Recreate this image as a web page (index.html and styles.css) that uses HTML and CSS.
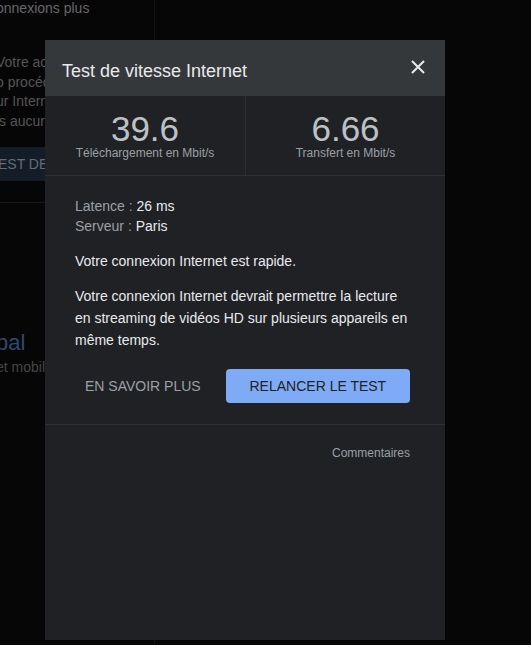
FILE: index.html
```html
<!DOCTYPE html>
<html lang="fr">
<head>
    <meta charset="UTF-8">
    <meta name="viewport" content="width=device-width, initial-scale=1.0">
    <title>Test de vitesse Internet</title>
    <link rel="stylesheet" href="styles.css">
</head>
<body>

<!-- page behind the dialog (dimmed) -->
<div class="page">
    <div class="side">
        <p class="side-top">onnexions plus</p>
        <p class="side-text">Votre accès<br>o procédure<br>ur Internet<br>is aucune</p>
        <div class="side-btn">EST DE DÉBIT</div>
        <hr class="side-rule">
        <h2 class="side-title">bal</h2>
        <p class="side-sub">et mobile</p>
    </div>
</div>

<div class="dialog">
    <div class="dialog-head">
        <h1>Test de vitesse Internet</h1>
        <button class="close" aria-label="Fermer">
            <svg width="14" height="14" viewBox="0 0 14 14">
                <path d="M1 1L13 13M13 1L1 13" stroke="#e8eaed" stroke-width="2" fill="none"/>
            </svg>
        </button>
    </div>

    <div class="stats">
        <div class="stat">
            <div class="stat-num">39.6</div>
            <div class="stat-label">Téléchargement en Mbit/s</div>
        </div>
        <div class="stat">
            <div class="stat-num">6.66</div>
            <div class="stat-label">Transfert en Mbit/s</div>
        </div>
    </div>

    <div class="dialog-body">
        <p class="meta"><span>Latence :</span> 26 ms<br><span>Serveur :</span> Paris</p>
        <p class="verdict">Votre connexion Internet est rapide.</p>
        <p class="detail">Votre connexion Internet devrait permettre la lecture en streaming de vidéos HD sur plusieurs appareils en même temps.</p>
        <div class="actions">
            <button class="link-btn">EN SAVOIR PLUS</button>
            <button class="main-btn">RELANCER LE TEST</button>
        </div>
    </div>

    <div class="dialog-foot">
        <a href="#">Commentaires</a>
    </div>
</div>

</body>
</html>
```

FILE: styles.css
```css
body {
    font-family: "Liberation Sans", Arial, sans-serif;
    margin: 0;
    padding: 0;
    background-color: #060606;
    width: 531px;
    height: 645px;
    overflow: hidden;
    position: relative;
}

/* Background page */
.page {
    height: 645px;
}
.side {
    width: 158px;
    margin-left: -4px;
    height: 645px;
    border-right: 1px solid #111;
}
.side p {
    margin: 0;
}
.side-top {
    font-size: 14px;
    color: #666;
    line-height: 16px;
}
.side-text {
    font-size: 14px;
    color: #555;
    line-height: 19.5px;
    margin-top: 37px !important;
}
.side-btn {
    margin-top: 16px;
    background-color: #131c27;
    color: #646d7a;
    font-size: 14px;
    height: 34px;
    line-height: 34px;
    padding-left: 2px;
    width: 120px;
}
.side-rule {
    border: 0;
    border-top: 1px solid #171717;
    margin: 21px 0 0;
}
.side-title {
    margin: 127px 0 0;
    font-size: 22px;
    font-weight: normal;
    color: #2c4a6c;
    line-height: 26px;
}
.side-sub {
    font-size: 14px;
    color: #464646;
    line-height: 18px;
    margin-top: 2px !important;
}

/* Dialog */
.dialog {
    position: absolute;
    left: 45px;
    top: 40px;
    width: 400px;
    height: 600px;
    background-color: #202124;
}
.dialog-head {
    height: 56px;
    background-color: #35383b;
    display: flex;
    align-items: center;
    justify-content: space-between;
    padding: 0 20px 0 17px;
}
.dialog-head h1 {
    margin: 0;
    font-size: 18px;
    font-weight: normal;
    color: #e8eaed;
    padding-top: 6px;
}
.close {
    background: none;
    border: 0;
    padding: 0;
    width: 14px;
    height: 14px;
    cursor: pointer;
    margin-top: -2px;
}
.close svg {
    display: block;
}

.stats {
    display: grid;
    grid-template-columns: 1fr 1fr;
    height: 79px;
    border-bottom: 1px solid #2e2f32;
}
.stat {
    text-align: center;
    padding-top: 15px;
}
.stat + .stat {
    border-left: 1px solid #2e2f32;
}
.stat-num {
    font-size: 35px;
    line-height: 35px;
    color: #bdc1c6;
}
.stat-label {
    font-size: 12px;
    line-height: 14px;
    color: #9aa0a6;
}

.dialog-body {
    padding: 20px 35px 21px 30px;
    border-bottom: 1px solid #2e2f32;
    font-size: 14px;
    color: #e8eaed;
}
.dialog-body p {
    margin: 0;
}
.meta {
    line-height: 20px;
}
.meta span {
    color: #9aa0a6;
}
.verdict {
    margin-top: 15px !important;
    line-height: 20px;
}
.detail {
    margin-top: 14px !important;
    line-height: 22px;
}
.actions {
    display: flex;
    justify-content: flex-end;
    align-items: center;
    gap: 15px;
    margin-top: 18px;
}
.link-btn {
    background: none;
    border: 0;
    font-family: inherit;
    font-size: 14px;
    color: #9aa0a6;
    padding: 8px 10px;
    white-space: nowrap;
}
.main-btn {
    background-color: #7faaf6;
    border: 0;
    border-radius: 4px;
    font-family: inherit;
    font-size: 14px;
    color: #202124;
    width: 185px;
    height: 34px;
    white-space: nowrap;
}

.dialog-foot {
    text-align: right;
    padding: 18px 35px 0 0;
}
.dialog-foot a {
    font-size: 12px;
    color: #9aa0a6;
    text-decoration: none;
}
```
